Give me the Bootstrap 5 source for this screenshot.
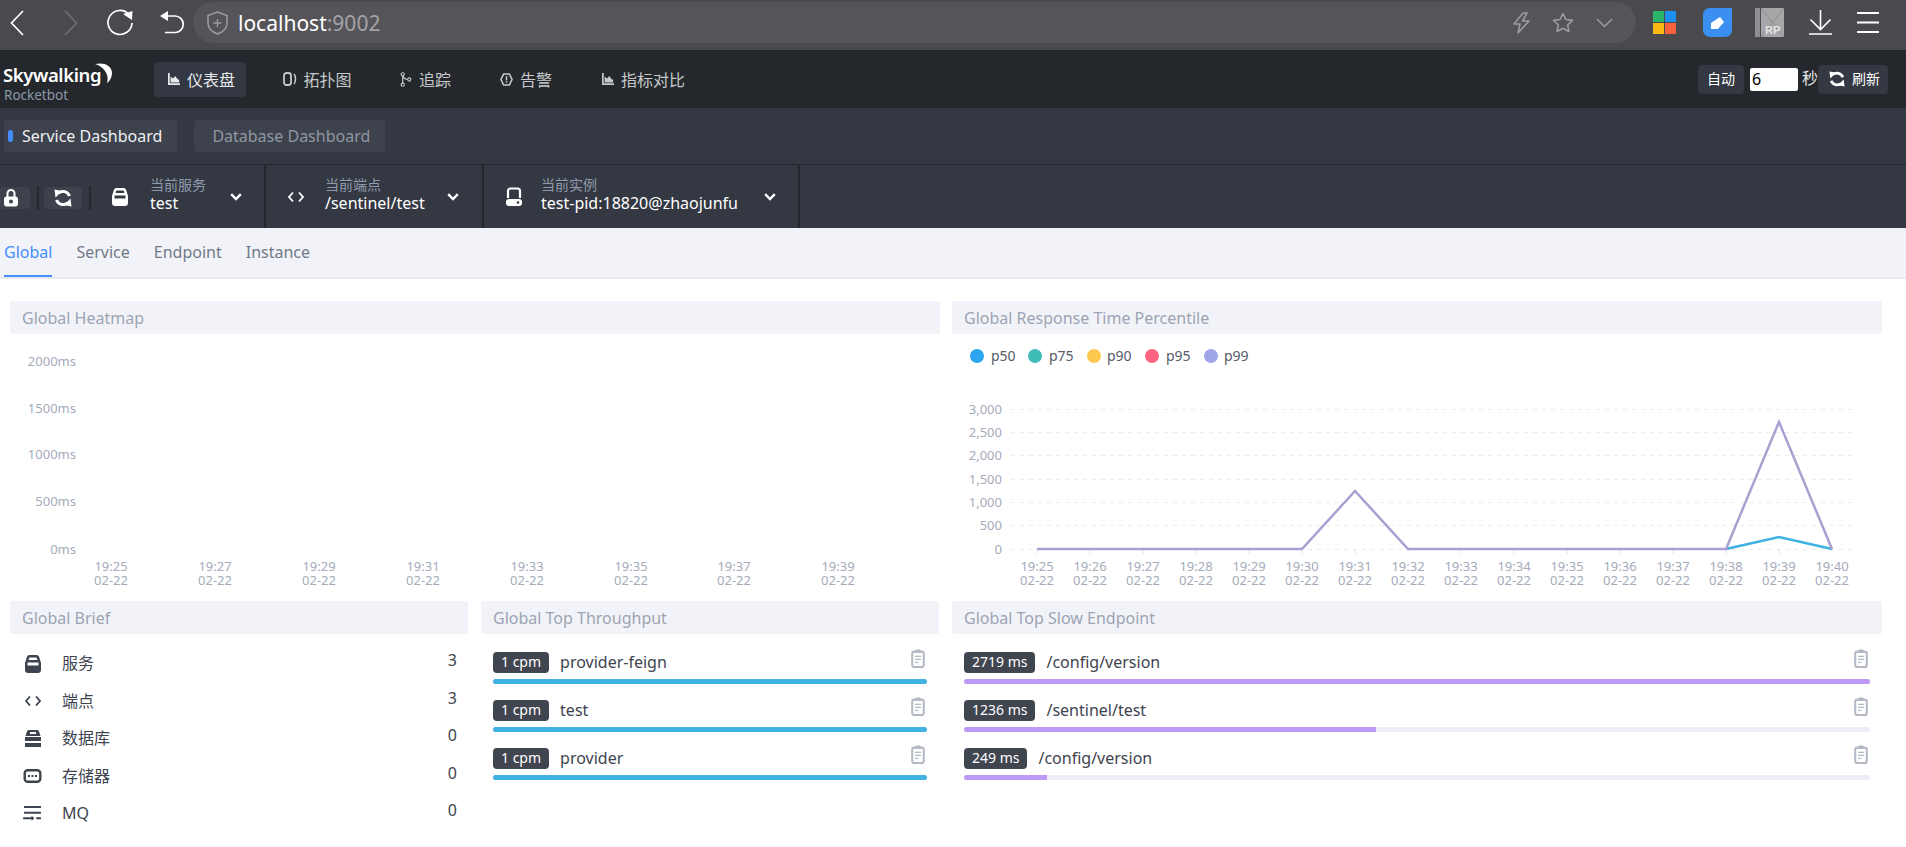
<!DOCTYPE html>
<html lang="zh">
<head>
<meta charset="utf-8">
<title>Rocketbot</title>
<link href="https://cdn.jsdelivr.net/npm/bootstrap@5.3.0/dist/css/bootstrap.min.css" rel="stylesheet">
<style>
html,body{height:847px;overflow:hidden;background:#fff;}
body{font-family:"Noto Sans","Noto Sans CJK SC",sans-serif;font-size:16px;color:#3d444f;line-height:1.2;}
svg{display:block;flex:none;}
.sym-defs{position:absolute;width:0;height:0;}

.chrome-bar{height:50px;background:#4a494e;padding:2px 22px 0 0;color:#fff;}
.chrome-nav{width:193px;height:41px;padding-left:10px;}
.chrome-nav .ic-fwd{margin-left:40px;color:#6f6e73;}
.chrome-nav .ic-reload{margin-left:28px;}
.chrome-nav .ic-undo{margin-left:26px;}
.url-pill{height:41px;width:1443px;background:#555459;border-radius:21px;padding-left:14px;color:#9c9b9f;}
.url-host{font-size:21px;margin-left:10px;padding-top:2px;color:#fff;line-height:1;}
.url-host span{color:#a4a3a7;}
.url-right{margin-left:auto;padding-right:23px;gap:22px;}
.chrome-tools{gap:25px;margin-left:17px;height:41px;}
.chrome-tools .ic-blue{margin:0 -2px 0 2px;}

.top-nav{height:58px;background:#24282c;}
.logo-box{width:154px;padding-left:3px;position:relative;height:58px;}
.logo-name{font-size:18.5px;font-weight:600;color:#fff;line-height:1;padding-top:16px;letter-spacing:-.4px;}
.logo-sub{font-size:13.500px;color:#8b98a8;line-height:1;padding-left:1px;margin-top:4px;}
.logo-moon{position:absolute;left:95px;top:13px;}
.nav-entry{height:35px;padding:0 11px 0 14px;border-radius:4px;color:#c6c8cb;font-size:16px;gap:7px;margin-right:23.5px;text-decoration:none;}
.nav-entry span{padding-top:3px;}
.nav-entry.is-on{background:#333842;color:#e8e9eb;margin-right:22.5px;}
.nav-entry.nav-trace{margin-right:24px;}
.nav-entry.nav-alarm{margin-right:25px;}
.auto-zone{margin-left:auto;padding-right:18px;font-size:16px;color:#e6e7e9;}
.auto-btn{height:29px;padding:0 9px;background:#333842;border:0;border-radius:4px;color:#fff;font-size:14px;line-height:1;--bs-btn-hover-bg:#333842;--bs-btn-hover-color:#fff;}
.auto-input{width:48px;height:23px;margin:0 4px 0 6px;padding:0 2px;border:0;border-radius:2px;background:#fff;font-size:16px;color:#000;line-height:1;}
.refresh-btn{gap:7px;padding:0 8px 0 11px;}

.dash-bar{height:56px;background:#333842;padding:12px 0 0 4px;gap:17px;}
.dash-tab{height:32px;padding:0 15px 0 18px;background:#3d424d;border-radius:4px;font-size:16px;color:#8f97a3;position:relative;line-height:1;}
.dash-tab.is-on{color:#eef0f2;padding:0 15px 0 18px;}
.dash-tab.is-on::before{content:"";position:absolute;left:4px;top:10px;width:5px;height:12px;border-radius:3px;background:#448dfe;}

.tool-bar{height:64px;background:#333842;border-top:1px solid #24282c;color:#fff;}
.lock-zone{width:112px;padding-top:3px;}
.tool-btn{height:22px;background:#3d424d;border-radius:4px;}
.tool-btn.t-lock{width:30px;padding-left:4px;}
.tool-btn.t-sync{width:38px;margin-left:14px;justify-content:center;}
.tool-sep{width:2px;height:24px;background:#24282c;}
.tool-sep.s1{margin-left:7px;margin-right:-9px;}
.tool-sep.s2{margin-left:7px;}
.sel-item{height:63px;border-right:2px solid #24282c;position:relative;}
.sel-1{width:154px;}
.sel-2{width:218px;padding-left:22px;}
.sel-3{width:316px;padding-left:22px;}
.sel-item>svg.ic-main{margin-right:21px;}
.sel-1>svg.ic-main{margin-right:22px;}
.sel-3>svg.ic-main{margin-right:19px;}
.sel-text{line-height:1;margin-bottom:4px;}
.sel-label{font-size:14px;color:#8f9bac;line-height:17px;}
.sel-value{font-size:16px;color:#fff;line-height:20px;}
.sel-chev{position:absolute;top:28px;}
.sel-1 .sel-chev{left:118px;}
.sel-2 .sel-chev{left:181px;}
.sel-3 .sel-chev{left:280px;}

.view-tabs{height:51px;background:#f2f3f8;border-bottom:2px solid #e9eaee;padding-left:4px;gap:24px;}
.view-tab{height:49px;padding:0;font-size:16px;color:#717987;line-height:49px;border-bottom:2px solid transparent;text-decoration:none;}
.view-tab.is-on{color:#448dfe;border-bottom-color:#448dfe;}

.board{padding:22px 24px 0 10px;}
.board-row{display:grid;grid-template-columns:458px 458px 930px;column-gap:13px;}
.row-top{grid-template-columns:930px 930px;column-gap:12px;}
.panel-head{height:33px;background:#f2f3f8;border-radius:2px;padding-left:12px;font-size:16px;color:#9da4b3;line-height:34px;}
.chart-text{font-family:"Noto Sans",sans-serif;font-size:13px;fill:#a4abba;}
.legend-text{font-family:"Noto Sans",sans-serif;font-size:14px;fill:#555c68;}

.brief-list{padding:11px 11px 0 15px;}
.brief-row{height:37.5px;}
.brief-ic{width:16px;margin-right:21px;color:#3d444f;}
.brief-ic .ic-wide{margin-left:-2px;}
.brief-name{font-size:16px;color:#3d444f;flex:1;}
.brief-val{font-size:16px;color:#3d444f;margin-top:-6px;}

.rank-list{padding:18px 12px 0 12px;}
.rank-item{height:48px;position:relative;}
.rank-head{height:21px;}
.rank-badge{background:#40454f;color:#fff;font-size:14px;font-weight:400;border-radius:4px;padding:0 8px;height:21px;line-height:20px;margin-right:11px;}
.rank-name{font-size:16px;color:#3d444f;line-height:21px;}
.rank-clip{margin-left:auto;margin-top:-3px;color:#b3bac6;margin-right:2px;}
.rank-bar{height:5px;margin-top:6px;background:#eeeef6;border-radius:3px;}
.bar-blue{background:#3fb1e3;}
.bar-purple{background:#bd99f5;}
</style>
</head>
<body>
<svg class="sym-defs" aria-hidden="true">
  <defs>
    <symbol id="i-service" viewBox="0 0 16 18"><path fill="currentColor" fill-rule="evenodd" d="M4.500 0h7C13 0 14 1 14.300 2.500L16 8v7c0 1.700-1.300 3-3 3H3c-1.700 0-3-1.300-3-3V8l1.700-5.500C2 1 3 0 4.500 0zM4.500 2.500 3.500 5h9l-1-2.500zM2.500 7.500v3h11v-3z"/></symbol>
    <symbol id="i-code" viewBox="0 0 16 12"><path fill="none" stroke="currentColor" stroke-width="1.800" d="M5 1.500 1 6l4 4.500M11 1.500 15 6l-4 4.500"/></symbol>
    <symbol id="i-inst" viewBox="0 0 16 20"><path fill="none" stroke="currentColor" stroke-width="2.200" d="M2 11V4c0-1.500 1-2.500 2.500-2.500h7C13 1.500 14 2.500 14 4v7"/><rect x="0" y="12" width="16" height="7" rx="3" fill="currentColor"/><circle cx="12" cy="15.500" r="1.300" fill="#333842"/></symbol>
    <symbol id="i-chart" viewBox="0 0 14 14"><path fill="currentColor" d="M0 0h2v12h12v2H0z"/><path fill="currentColor" d="M3 11V4l3 2.500L8.500 3.500 11 7l2 1v3z"/></symbol>
    <symbol id="i-topo" viewBox="0 0 14 14"><rect x="1" y="1" width="7" height="12" rx="2.500" fill="none" stroke="currentColor" stroke-width="1.800"/><path fill="none" stroke="currentColor" stroke-width="1.500" d="M11 2c2 2 2 8 0 10"/></symbol>
    <symbol id="i-trace" viewBox="0 0 12 16"><circle cx="2.500" cy="2.500" r="1.700" fill="none" stroke="currentColor" stroke-width="1.200"/><circle cx="2.500" cy="13.500" r="1.700" fill="none" stroke="currentColor" stroke-width="1.200"/><circle cx="9.500" cy="8" r="1.700" fill="none" stroke="currentColor" stroke-width="1.200"/><path fill="none" stroke="currentColor" stroke-width="1.300" d="M2.500 4v8M3 4.500C3.500 7 5 8 8 8"/></symbol>
    <symbol id="i-alarm" viewBox="0 0 14 14"><path fill="none" stroke="currentColor" stroke-width="1.700" d="M4 1h6l3 6-3 6H4L1 7z" stroke-linejoin="round"/><path fill="currentColor" d="M6.200 3.500h1.600v4.500H6.200zM6.200 9h1.600v1.600H6.200z"/></symbol>
    <symbol id="i-sync" viewBox="0 0 18 18"><path fill="none" stroke="currentColor" stroke-width="3" d="M15.500 7A7 7 0 0 0 4.500 4M2.500 11a7 7 0 0 0 11 3"/><path fill="currentColor" d="M0.500 0.500 8 2 1.500 8.500zM17.500 17.500 10 16l6.500-6.500z"/></symbol>
    <symbol id="i-lock" viewBox="0 0 14 18"><path fill="none" stroke="currentColor" stroke-width="2" d="M3.500 8V4.500a3.500 3.500 0 0 1 7 0V8"/><path fill="currentColor" fill-rule="evenodd" d="M2.500 7.500h9c1.400 0 2.500 1 2.500 2.500v5c0 1.500-1.100 2.500-2.500 2.500h-9C1.100 17.500 0 16.500 0 15v-5c0-1.500 1.100-2.500 2.500-2.500zM7 10.500a2 2 0 1 0 0 4 2 2 0 0 0 0-4z"/></symbol>
    <symbol id="i-chev" viewBox="0 0 12 8"><path fill="none" stroke="currentColor" stroke-width="2.400" d="M1.200 1.200 6 6l4.800-4.800"/></symbol>
    <symbol id="i-db" viewBox="0 0 16 18"><path fill="currentColor" d="M4 0h8c1 0 1.700.6 2 1.500L15.500 6H.5L2 1.500C2.300.6 3 0 4 0zM0 7h16v4H0zM0 13h16v4H0z"/><rect x="5" y="2" width="6" height="2" fill="#fff"/></symbol>
    <symbol id="i-store" viewBox="0 0 18 14"><rect x="1.200" y="1.200" width="15.600" height="11.600" rx="3" fill="none" stroke="currentColor" stroke-width="2.400"/><path fill="currentColor" d="M4.500 6h2v2h-2zM8 6h2v2H8zM11.500 6h2v2h-2z"/></symbol>
    <symbol id="i-mq" viewBox="0 0 20 16"><path fill="currentColor" d="M1 0h18v2.200H1zM1 6h18v2.200H1zM0 12h9v-1.600l3 2.600-3 2.600V14H0zM14 12h5v2.200h-5z"/></symbol>
    <symbol id="i-clip" viewBox="0 0 16 22"><rect x="1.300" y="3" width="13.400" height="18" rx="2.500" fill="none" stroke="currentColor" stroke-width="2.400"/><rect x="5" y="0.500" width="6" height="4" rx="1" fill="currentColor"/><path fill="none" stroke="currentColor" stroke-width="1.500" d="M4.500 8.500h7M4.500 12h7M4.500 15.500h4"/></symbol>
  </defs>
</svg>

<!-- Browser chrome -->
<div class="chrome-bar d-flex align-items-start">
  <div class="chrome-nav d-flex align-items-center">
    <svg width="14" height="26" viewBox="0 0 14 26"><path fill="none" stroke="currentColor" stroke-width="1.700" d="M13 1 1.500 13 13 25"/></svg>
    <svg class="ic-fwd" width="14" height="26" viewBox="0 0 14 26"><path fill="none" stroke="currentColor" stroke-width="1.700" d="M1 1 12.500 13 1 25"/></svg>
    <svg class="ic-reload" width="28" height="28" viewBox="0 0 28 28"><path fill="none" stroke="currentColor" stroke-width="1.700" d="M23 5.500A12 12 0 1 0 26 14"/><path fill="currentColor" d="M17 5 26.500 2 26 11z"/></svg>
    <svg class="ic-undo" width="25" height="25" viewBox="0 0 25 25"><path fill="none" stroke="currentColor" stroke-width="1.700" d="M6 6h9a8 8 0 0 1 0 16.500H5"/><path fill="currentColor" d="M8 1v10L0 6z"/></svg>
  </div>
  <div class="url-pill d-flex align-items-center">
    <svg width="21" height="24" viewBox="0 0 21 24"><path fill="none" stroke="currentColor" stroke-width="1.500" d="M10.500 1 20 4.500V12c0 5-4 9-9.500 11C5 21 1 17 1 12V4.500z"/><path fill="none" stroke="currentColor" stroke-width="1.300" d="M10.500 8v8M6.500 12h8"/></svg>
    <div class="url-host">localhost<span>:9002</span></div>
    <div class="url-right d-flex align-items-center">
      <svg width="17" height="22" viewBox="0 0 17 22"><path fill="none" stroke="currentColor" stroke-width="1.600" stroke-linejoin="round" d="M10 1 1 12h6l-2 9 11-12H9.500L14 1z"/></svg>
      <svg width="22" height="21" viewBox="0 0 22 21"><path fill="none" stroke="currentColor" stroke-width="1.600" stroke-linejoin="round" d="M11 1.500l2.900 6 6.600.9-4.800 4.600 1.200 6.500-5.900-3.200-5.900 3.200 1.200-6.500L1.500 8.400l6.600-.9z"/></svg>
      <svg width="17" height="10" viewBox="0 0 17 10"><path fill="none" stroke="currentColor" stroke-width="1.500" d="M1 1l7.500 7.500L16 1"/></svg>
    </div>
  </div>
  <div class="chrome-tools d-flex align-items-center">
    <svg width="23" height="23" viewBox="0 0 23 23"><rect width="11" height="11" fill="#2bb56a"/><rect x="12" width="11" height="11" fill="#1e90f0"/><rect y="12" width="11" height="11" fill="#fdb813"/><rect x="12" y="12" width="11" height="11" fill="#f5623b"/></svg>
    <svg class="ic-blue" width="29" height="29" viewBox="0 0 29 29"><path fill="#3a8ff0" d="M7 0h22v22c0 4-3 7-7 7H7c-4 0-7-3-7-7V7c0-4 3-7 7-7z"/><path fill="#fff" d="M8 15 17 9l4 5-6 7H8z"/></svg>
    <svg width="29" height="29" viewBox="0 0 29 29"><rect width="5" height="29" fill="#8f8e91"/><rect x="6" width="23" height="29" fill="#a7a6a8"/><path stroke="#8f8e91" fill="none" d="M6 0l23 29M29 0 6 29"/><text x="10" y="26" font-size="11" font-weight="700" fill="#e6e6e6" font-family="Liberation Sans, sans-serif">RP</text></svg>
    <svg width="23" height="25" viewBox="0 0 23 25"><path fill="none" stroke="currentColor" stroke-width="1.600" d="M11.500 0v19M1.500 9.500l10 10 10-10M0 24h23"/></svg>
    <svg width="22" height="21" viewBox="0 0 22 21"><path stroke="currentColor" stroke-width="2" d="M0 1h22M0 10.500h22M0 20h22"/></svg>
  </div>
</div>

<!-- App navigation -->
<div class="top-nav d-flex align-items-center">
  <div class="logo-box">
    <div class="logo-name">Skywalking</div>
    <div class="logo-sub">Rocketbot</div>
    <svg class="logo-moon" width="17" height="20" viewBox="0 0 17 20"><path fill="#fff" d="M0 1C8-1 17 2 17 10c0 4-2 8-5 10 1-4 1-8-2-12C8 5 4 2 0 1z"/></svg>
  </div>
  <a class="nav-entry is-on d-flex align-items-center" href="#"><svg width="12" height="12"><use href="#i-chart"/></svg><span>仪表盘</span></a>
  <a class="nav-entry d-flex align-items-center" href="#"><svg width="14" height="14"><use href="#i-topo"/></svg><span>拓扑图</span></a>
  <a class="nav-entry nav-trace d-flex align-items-center" href="#"><svg width="12" height="15"><use href="#i-trace"/></svg><span>追踪</span></a>
  <a class="nav-entry nav-alarm d-flex align-items-center" href="#"><svg width="13" height="13"><use href="#i-alarm"/></svg><span>告警</span></a>
  <a class="nav-entry d-flex align-items-center" href="#"><svg width="12" height="12"><use href="#i-chart"/></svg><span>指标对比</span></a>
  <div class="auto-zone d-flex align-items-center">
    <button class="btn auto-btn" type="button">自动</button>
    <input class="auto-input" type="text" value="6" aria-label="秒">
    <span>秒</span>
    <button class="btn auto-btn refresh-btn d-flex align-items-center" type="button"><svg width="16" height="16"><use href="#i-sync"/></svg><span>刷新</span></button>
  </div>
</div>

<!-- Dashboards -->
<div class="dash-bar d-flex align-items-start">
  <div class="dash-tab is-on d-flex align-items-center">Service Dashboard</div>
  <div class="dash-tab d-flex align-items-center">Database Dashboard</div>
</div>

<!-- Selectors -->
<div class="tool-bar d-flex align-items-stretch">
  <div class="lock-zone d-flex align-items-center">
    <div class="tool-btn t-lock d-flex align-items-center"><svg width="14" height="18"><use href="#i-lock"/></svg></div>
    <div class="tool-sep s1"></div>
    <div class="tool-btn t-sync d-flex align-items-center"><svg width="18" height="18"><use href="#i-sync"/></svg></div>
    <div class="tool-sep s2"></div>
  </div>
  <div class="sel-item sel-1 d-flex align-items-center">
    <svg class="ic-main" width="16" height="18"><use href="#i-service"/></svg>
    <div class="sel-text"><div class="sel-label">当前服务</div><div class="sel-value">test</div></div>
    <svg class="sel-chev" width="12" height="8"><use href="#i-chev"/></svg>
  </div>
  <div class="sel-item sel-2 d-flex align-items-center">
    <svg class="ic-main" width="16" height="12"><use href="#i-code"/></svg>
    <div class="sel-text"><div class="sel-label">当前端点</div><div class="sel-value">/sentinel/test</div></div>
    <svg class="sel-chev" width="12" height="8"><use href="#i-chev"/></svg>
  </div>
  <div class="sel-item sel-3 d-flex align-items-center">
    <svg class="ic-main" width="16" height="20"><use href="#i-inst"/></svg>
    <div class="sel-text"><div class="sel-label">当前实例</div><div class="sel-value">test-pid:18820@zhaojunfu</div></div>
    <svg class="sel-chev" width="12" height="8"><use href="#i-chev"/></svg>
  </div>
</div>

<!-- View tabs -->
<nav class="view-tabs d-flex">
  <a class="view-tab is-on" href="#">Global</a>
  <a class="view-tab" href="#">Service</a>
  <a class="view-tab" href="#">Endpoint</a>
  <a class="view-tab" href="#">Instance</a>
</nav>

<!-- Board -->
<main class="board">
  <div class="board-row row-top">
    <section>
      <div class="panel-head">Global Heatmap</div>
      <svg width="930" height="267" viewBox="10 334 930 267">
        <g stroke="#ececec" stroke-dasharray="1 51.500">
          <path d="M85 361H900M85 408H900M85 455H900M85 501H900M85 549H900"/>
        </g>
        <g class="chart-text" text-anchor="end">
          <text x="76" y="366">2000ms</text><text x="76" y="413">1500ms</text><text x="76" y="459">1000ms</text><text x="76" y="506">500ms</text><text x="76" y="554">0ms</text>
        </g>
        <g class="chart-text" text-anchor="middle">
          <text y="571"><tspan x="111">19:25</tspan><tspan x="111" dy="14">02-22</tspan></text>
          <text y="571"><tspan x="215">19:27</tspan><tspan x="215" dy="14">02-22</tspan></text>
          <text y="571"><tspan x="319">19:29</tspan><tspan x="319" dy="14">02-22</tspan></text>
          <text y="571"><tspan x="423">19:31</tspan><tspan x="423" dy="14">02-22</tspan></text>
          <text y="571"><tspan x="527">19:33</tspan><tspan x="527" dy="14">02-22</tspan></text>
          <text y="571"><tspan x="631">19:35</tspan><tspan x="631" dy="14">02-22</tspan></text>
          <text y="571"><tspan x="734">19:37</tspan><tspan x="734" dy="14">02-22</tspan></text>
          <text y="571"><tspan x="838">19:39</tspan><tspan x="838" dy="14">02-22</tspan></text>
        </g>
      </svg>
    </section>
    <section>
      <div class="panel-head">Global Response Time Percentile</div>
      <svg width="930" height="267" viewBox="952 334 930 267">
        <circle cx="977" cy="356" r="7" fill="#2ca5ee"/><text class="legend-text" x="991" y="361">p50</text>
        <circle cx="1035" cy="356" r="7" fill="#40bcb8"/><text class="legend-text" x="1049" y="361">p75</text>
        <circle cx="1094" cy="356" r="7" fill="#ffc94f"/><text class="legend-text" x="1107" y="361">p90</text>
        <circle cx="1152" cy="356" r="7" fill="#ff6582"/><text class="legend-text" x="1166" y="361">p95</text>
        <circle cx="1211" cy="356" r="7" fill="#9fa5e6"/><text class="legend-text" x="1224" y="361">p99</text>
        <g stroke="#ededed" stroke-dasharray="4 5">
          <path d="M1011 409.500H1858M1011 432.500H1858M1011 455.500H1858M1011 479.500H1858M1011 502.500H1858M1011 525.500H1858M1011 549.500H1858"/>
        </g>
        <g class="chart-text" text-anchor="end">
          <text x="1002" y="414">3,000</text><text x="1002" y="437">2,500</text><text x="1002" y="460">2,000</text><text x="1002" y="484">1,500</text><text x="1002" y="507">1,000</text><text x="1002" y="530">500</text><text x="1002" y="554">0</text>
        </g>
        <g stroke="#e6e6e6"><path d="M1037 549v5M1090 549v5M1143 549v5M1196 549v5M1249 549v5M1302 549v5M1355 549v5M1408 549v5M1461 549v5M1514 549v5M1567 549v5M1620 549v5M1673 549v5M1726 549v5M1779 549v5M1832 549v5"/></g>
        <path fill="none" stroke="#3fb1e3" stroke-width="2.500" d="M1726 549 1779 537 1832 549"/>
        <path fill="none" stroke="#a99fd1" stroke-width="2.500" d="M1037 549H1302L1355 491 1408 549H1726L1779 422 1832 549"/>
        <g class="chart-text" text-anchor="middle">
          <text y="571"><tspan x="1037">19:25</tspan><tspan x="1037" dy="14">02-22</tspan></text>
          <text y="571"><tspan x="1090">19:26</tspan><tspan x="1090" dy="14">02-22</tspan></text>
          <text y="571"><tspan x="1143">19:27</tspan><tspan x="1143" dy="14">02-22</tspan></text>
          <text y="571"><tspan x="1196">19:28</tspan><tspan x="1196" dy="14">02-22</tspan></text>
          <text y="571"><tspan x="1249">19:29</tspan><tspan x="1249" dy="14">02-22</tspan></text>
          <text y="571"><tspan x="1302">19:30</tspan><tspan x="1302" dy="14">02-22</tspan></text>
          <text y="571"><tspan x="1355">19:31</tspan><tspan x="1355" dy="14">02-22</tspan></text>
          <text y="571"><tspan x="1408">19:32</tspan><tspan x="1408" dy="14">02-22</tspan></text>
          <text y="571"><tspan x="1461">19:33</tspan><tspan x="1461" dy="14">02-22</tspan></text>
          <text y="571"><tspan x="1514">19:34</tspan><tspan x="1514" dy="14">02-22</tspan></text>
          <text y="571"><tspan x="1567">19:35</tspan><tspan x="1567" dy="14">02-22</tspan></text>
          <text y="571"><tspan x="1620">19:36</tspan><tspan x="1620" dy="14">02-22</tspan></text>
          <text y="571"><tspan x="1673">19:37</tspan><tspan x="1673" dy="14">02-22</tspan></text>
          <text y="571"><tspan x="1726">19:38</tspan><tspan x="1726" dy="14">02-22</tspan></text>
          <text y="571"><tspan x="1779">19:39</tspan><tspan x="1779" dy="14">02-22</tspan></text>
          <text y="571"><tspan x="1832">19:40</tspan><tspan x="1832" dy="14">02-22</tspan></text>
        </g>
      </svg>
    </section>
  </div>
  <div class="board-row">
    <section>
      <div class="panel-head">Global Brief</div>
      <div class="brief-list">
        <div class="brief-row d-flex align-items-center"><div class="brief-ic"><svg width="16" height="18"><use href="#i-service"/></svg></div><div class="brief-name">服务</div><div class="brief-val">3</div></div>
        <div class="brief-row d-flex align-items-center"><div class="brief-ic"><svg width="16" height="12"><use href="#i-code"/></svg></div><div class="brief-name">端点</div><div class="brief-val">3</div></div>
        <div class="brief-row d-flex align-items-center"><div class="brief-ic"><svg width="16" height="18"><use href="#i-db"/></svg></div><div class="brief-name">数据库</div><div class="brief-val">0</div></div>
        <div class="brief-row d-flex align-items-center"><div class="brief-ic"><svg class="ic-wide" width="19" height="14"><use href="#i-store"/></svg></div><div class="brief-name">存储器</div><div class="brief-val">0</div></div>
        <div class="brief-row d-flex align-items-center"><div class="brief-ic"><svg class="ic-wide" width="19" height="15"><use href="#i-mq"/></svg></div><div class="brief-name">MQ</div><div class="brief-val">0</div></div>
      </div>
    </section>
    <section>
      <div class="panel-head">Global Top Throughput</div>
      <div class="rank-list">
        <div class="rank-item"><div class="rank-head d-flex"><span class="badge rank-badge">1 cpm</span><span class="rank-name">provider-feign</span><svg class="rank-clip" width="14" height="19"><use href="#i-clip"/></svg></div><div class="progress rank-bar"><div class="progress-bar bar-blue" style="width:100%"></div></div></div>
        <div class="rank-item"><div class="rank-head d-flex"><span class="badge rank-badge">1 cpm</span><span class="rank-name">test</span><svg class="rank-clip" width="14" height="19"><use href="#i-clip"/></svg></div><div class="progress rank-bar"><div class="progress-bar bar-blue" style="width:100%"></div></div></div>
        <div class="rank-item"><div class="rank-head d-flex"><span class="badge rank-badge">1 cpm</span><span class="rank-name">provider</span><svg class="rank-clip" width="14" height="19"><use href="#i-clip"/></svg></div><div class="progress rank-bar"><div class="progress-bar bar-blue" style="width:100%"></div></div></div>
      </div>
    </section>
    <section>
      <div class="panel-head">Global Top Slow Endpoint</div>
      <div class="rank-list">
        <div class="rank-item"><div class="rank-head d-flex"><span class="badge rank-badge">2719 ms</span><span class="rank-name">/config/version</span><svg class="rank-clip" width="14" height="19"><use href="#i-clip"/></svg></div><div class="progress rank-bar"><div class="progress-bar bar-purple" style="width:100%"></div></div></div>
        <div class="rank-item"><div class="rank-head d-flex"><span class="badge rank-badge">1236 ms</span><span class="rank-name">/sentinel/test</span><svg class="rank-clip" width="14" height="19"><use href="#i-clip"/></svg></div><div class="progress rank-bar"><div class="progress-bar bar-purple" style="width:45.5%"></div></div></div>
        <div class="rank-item"><div class="rank-head d-flex"><span class="badge rank-badge">249 ms</span><span class="rank-name">/config/version</span><svg class="rank-clip" width="14" height="19"><use href="#i-clip"/></svg></div><div class="progress rank-bar"><div class="progress-bar bar-purple" style="width:9.2%"></div></div></div>
      </div>
    </section>
  </div>
</main>
<script src="https://cdn.jsdelivr.net/npm/bootstrap@5.3.0/dist/js/bootstrap.bundle.min.js"></script>
</body>
</html>
